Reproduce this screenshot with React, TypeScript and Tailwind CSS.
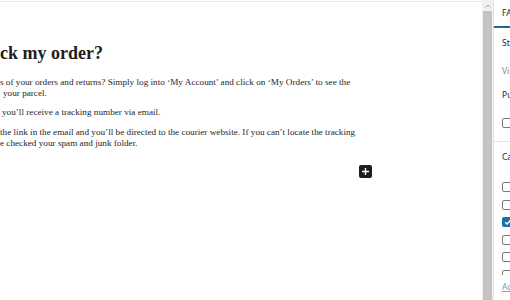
import React from "react";

function Box({ checked = false }: { checked?: boolean }) {
  return checked ? (
    <div className="w-[11px] h-[10px] rounded-[2px] bg-[#1f6fa8] flex items-center justify-center">
      <svg width="8" height="8" viewBox="0 0 8 8">
        <path d="M1.2 4.2 L3.1 6 L6.8 1.8" stroke="#fff" strokeWidth="1.3" fill="none" />
      </svg>
    </div>
  ) : (
    <div className="w-[11px] h-[10px] rounded-[2px] border border-[#7a7a7a] bg-white" />
  );
}

export default function App() {
  return (
    <div className="w-[510px] h-[300px] flex overflow-hidden bg-white">
      <main className="w-[482px] h-full pt-[1px] overflow-hidden">
        <div className="h-full border-t border-[#e6e6e6] text-[#262626] font-['Liberation_Serif',serif]">
          <h1 className="mt-[40px] font-bold text-[18px] leading-[22px] whitespace-nowrap text-[#1e1e1e]">
            ck my order?
          </h1>
          <div className="mt-[13px] text-[9.2px] leading-[11px] whitespace-nowrap">
            <p>s of your orders and returns? Simply log into ‘My Account’ and click on ‘My Orders’ to see the</p>
            <p className="pl-[3px]">your parcel.</p>
          </div>
          <div className="mt-[8px] text-[9.2px] leading-[11px] whitespace-nowrap">
            <p className="pl-[2px]">you’ll receive a tracking number via email.</p>
          </div>
          <div className="mt-[9px] text-[9.2px] leading-[11px] whitespace-nowrap">
            <p>the link in the email and you’ll be directed to the courier website. If you can’t locate the tracking</p>
            <p>e checked your spam and junk folder.</p>
          </div>
          <div className="mt-[16px] ml-[359px] w-[13px] h-[13px] rounded-[2px] bg-[#1e1e1e] flex items-center justify-center">
            <svg width="9" height="9" viewBox="0 0 9 9">
              <path d="M4.5 1 V8 M1 4.5 H8" stroke="#fff" strokeWidth="1.4" />
            </svg>
          </div>
        </div>
      </main>
      <div className="w-[11px] h-full bg-[#f0f0f0] flex flex-col">
        <div className="h-[11px] flex items-center justify-center">
          <svg width="6" height="4" viewBox="0 0 6 4">
            <path d="M0.5 3.5 L3 1 L5.5 3.5" stroke="#a3a3a3" strokeWidth="1" fill="none" />
          </svg>
        </div>
        <div className="flex-1 mx-[1px] bg-[#c4c4c4]" />
      </div>
      <aside className="flex-1 h-full border-l border-[#e4e4e4] font-['Noto_Sans',sans-serif] text-[8.5px] text-[#1e1e1e] overflow-hidden">
        <div className="h-[26px] pl-[8px] pt-[1px] flex items-center whitespace-nowrap">FAQ</div>
        <div className="h-[2px] bg-[#1c6a8c]" />
        <div className="h-[30px] pl-[8px] flex items-center whitespace-nowrap">Status</div>
        <div className="h-[26px] pl-[8px] flex items-center whitespace-nowrap text-[#8a8a8a]">Visibility</div>
        <div className="h-[22px] pl-[8px] flex items-center whitespace-nowrap">Publish</div>
        <div className="h-[36px] pl-[8px] pt-[12px] border-b border-[#e4e4e4]">
          <Box />
        </div>
        <div className="h-[30px] pl-[8px] flex items-center whitespace-nowrap">Categories</div>
        <div className="h-[103px] pl-[8px] pt-[10px] overflow-hidden">
          <div className="h-[17.5px]"><Box /></div>
          <div className="h-[17.5px]"><Box /></div>
          <div className="h-[17.5px]"><Box checked /></div>
          <div className="h-[17.5px]"><Box /></div>
          <div className="h-[17.5px]"><Box /></div>
          <div className="h-[17.5px]"><Box /></div>
        </div>
        <div className="h-[24px] pl-[8px] flex items-center whitespace-nowrap text-[#6a9fc8] underline">Add New Category</div>
      </aside>
    </div>
  );
}
